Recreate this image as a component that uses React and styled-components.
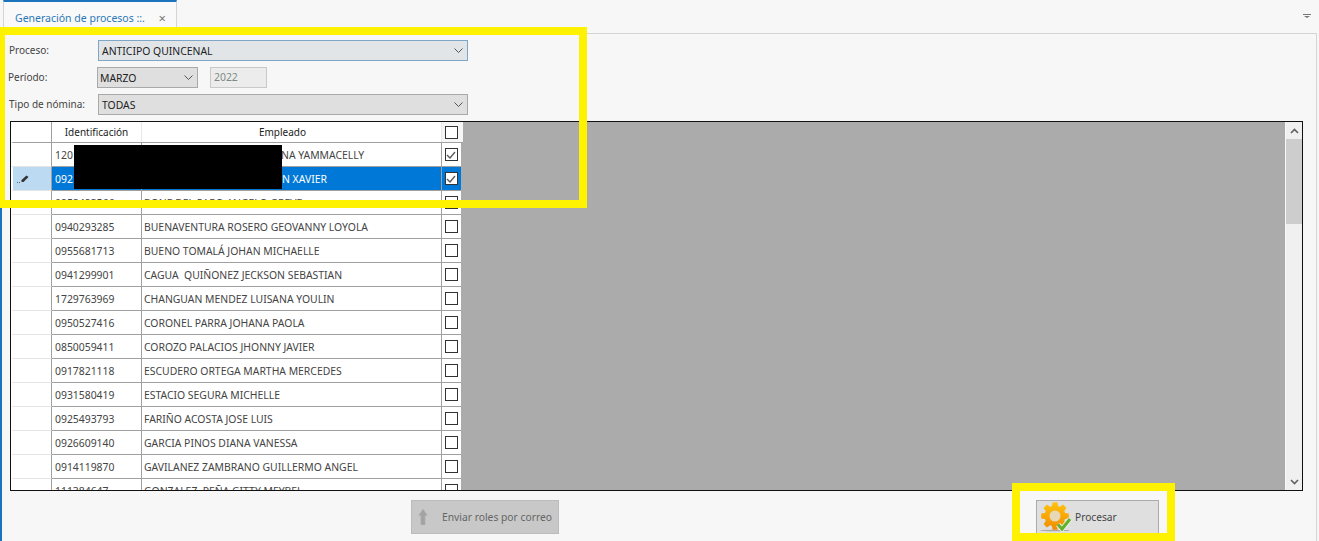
import React from "react";
import styled, { createGlobalStyle } from "styled-components";

const GlobalStyle = createGlobalStyle`
    html, body {
        margin: 0;
        padding: 0;
        background: #f7f7f7;
    }
`;

const rows = [
    { id: "120", name: "NA YAMMACELLY", indent: 139, checked: true },
    { id: "092", name: "N XAVIER", indent: 140, checked: true, selected: true },
    { id: "0958493566", name: "BONE DEL PARO ANGELO GREVE" },
    { id: "0940293285", name: "BUENAVENTURA ROSERO GEOVANNY LOYOLA" },
    { id: "0955681713", name: "BUENO TOMALÁ JOHAN MICHAELLE" },
    { id: "0941299901", name: "CAGUA  QUIÑONEZ JECKSON SEBASTIAN" },
    { id: "1729763969", name: "CHANGUAN MENDEZ LUISANA YOULIN" },
    { id: "0950527416", name: "CORONEL PARRA JOHANA PAOLA" },
    { id: "0850059411", name: "COROZO PALACIOS JHONNY JAVIER" },
    { id: "0917821118", name: "ESCUDERO ORTEGA MARTHA MERCEDES" },
    { id: "0931580419", name: "ESTACIO SEGURA MICHELLE" },
    { id: "0925493793", name: "FARIÑO ACOSTA JOSE LUIS" },
    { id: "0926609140", name: "GARCIA PINOS DIANA VANESSA" },
    { id: "0914119870", name: "GAVILANEZ ZAMBRANO GUILLERMO ANGEL" },
    { id: "111384647", name: "GONZALEZ  PEÑA GITTY MEYBEL" },
];

export default function App() {
    return (
        <>
            <GlobalStyle />
            <Screen>
                <TabStrip>
                    <Tab>
                        <TabTitle>Generación de procesos ::.</TabTitle>
                        <TabClose>×</TabClose>
                    </Tab>
                    <TabMenu>
                        <svg width="8" height="4" viewBox="0 0 8 4">
                            <path d="M0 0h8v1H0z M1 2h6L4 4z" fill="#777" />
                        </svg>
                    </TabMenu>
                </TabStrip>
                <Panel>
                    <Form>
                        <Label>Proceso:</Label>
                        <Combo $focused>
                            ANTICIPO QUINCENAL
                            <Chevron />
                        </Combo>
                        <Label $shift>Período:</Label>
                        <PeriodRow>
                            <Combo $small>
                                MARZO
                                <Chevron />
                            </Combo>
                            <YearBox>2022</YearBox>
                        </PeriodRow>
                        <Label>Tipo de nómina:</Label>
                        <Combo>
                            TODAS
                            <Chevron />
                        </Combo>
                    </Form>
                    <Grid>
                        <GridBody>
                            <HeadRow>
                                <RowHead $head />
                                <HeadCell $w={90}>Identificación</HeadCell>
                                <HeadCell $w={300} $pad={18}>Empleado</HeadCell>
                                <CheckCell $head>
                                    <CheckBox />
                                </CheckCell>
                            </HeadRow>
                            {rows.map((r) => (
                                <Row key={r.id} $selected={r.selected}>
                                    <RowHead $selected={r.selected}>
                                        {r.selected && <PencilIcon />}
                                    </RowHead>
                                    <IdCell>{r.id}</IdCell>
                                    <NameCell $indent={r.indent}>{r.name}</NameCell>
                                    <CheckCell>
                                        <CheckBox>{r.checked && <CheckMark />}</CheckBox>
                                    </CheckCell>
                                </Row>
                            ))}
                        </GridBody>
                        <ScrollBar>
                            <ScrollButton>
                                <svg width="9" height="6" viewBox="0 0 9 6">
                                    <path d="M1 5l3.5-3.5L8 5" fill="none" stroke="#606060" strokeWidth="1.6" />
                                </svg>
                            </ScrollButton>
                            <ScrollThumb />
                            <ScrollTrack />
                            <ScrollButton>
                                <svg width="9" height="6" viewBox="0 0 9 6">
                                    <path d="M1 1l3.5 3.5L8 1" fill="none" stroke="#606060" strokeWidth="1.6" />
                                </svg>
                            </ScrollButton>
                        </ScrollBar>
                    </Grid>
                    <Actions>
                        <MailButton>
                            <svg width="10" height="16" viewBox="0 0 10 16">
                                <path d="M5 0l4.500 6.500H7.200V16H2.800V6.500H0.500z" fill="#a3a3a3" stroke="#b5b5b5" strokeWidth="0.5" />
                            </svg>
                            <span>Enviar roles por correo</span>
                        </MailButton>
                        <ProcessButton>
                            <GearIcon />
                            Procesar
                        </ProcessButton>
                    </Actions>
                </Panel>
                <Redaction />
                <HighlightTop />
                <HighlightBottom />
            </Screen>
        </>
    );
}

function Chevron() {
    return (
        <ChevronWrap>
            <svg width="9" height="5" viewBox="0 0 9 5">
                <path d="M0.500 0.500l4 4 4-4" fill="none" stroke="#555" strokeWidth="1" />
            </svg>
        </ChevronWrap>
    );
}

function CheckMark() {
    return (
        <svg width="10" height="10" viewBox="0 0 10 10">
            <path d="M1 5l3 3L9 2" fill="none" stroke="#555" strokeWidth="1.300" />
        </svg>
    );
}

function PencilIcon() {
    return (
        <svg width="12" height="8" viewBox="0 0 12 8">
            <path d="M4.500 5L9.500 0.500l2 1.500L6.500 7H4.500z" fill="#333" />
            <path d="M0 7.500h1M2 7.500h1" stroke="#666" strokeWidth="1" />
        </svg>
    );
}

// builds the 8 teeth of the gear
function gearPath(cx, cy, outer, inner) {
    const pts = [];
    for (let i = 0; i < 8; i++) {
        const a = (i * Math.PI) / 4;
        [
            [-0.3, inner],
            [-0.17, outer],
            [0.17, outer],
            [0.3, inner],
        ].forEach(([d, r]) => {
            pts.push(`${(cx + r * Math.cos(a + d)).toFixed(1)} ${(cy + r * Math.sin(a + d)).toFixed(1)}`);
        });
    }
    return `M${pts.join("L")}z`;
}

function GearIcon() {
    return (
        <svg width="32" height="30" viewBox="0 0 32 30">
            <defs>
                <linearGradient id="gearFill" x1="0" y1="0" x2="0" y2="1">
                    <stop offset="0" stopColor="#ffc20e" />
                    <stop offset="1" stopColor="#f08c00" />
                </linearGradient>
            </defs>
            <ellipse cx="15" cy="28.500" rx="15" ry="0.800" fill="#a8a8a8" />
            <path d={gearPath(15, 14, 14, 10.5)} fill="url(#gearFill)" />
            <circle cx="15" cy="14" r="5.500" fill="#e8d8b8" />
            <path d="M18 22.500l4 4.500 8-10" fill="none" stroke="#eef5e4" strokeWidth="5" />
            <path d="M18 22.500l4 4.500 8-10" fill="none" stroke="#63b22f" strokeWidth="3.200" />
        </svg>
    );
}

const Screen = styled.div`
    position: relative;
    width: 1319px;
    height: 541px;
    overflow: hidden;
    background: #f7f7f7;
    font-family: "Noto Sans", sans-serif;
    font-size: 10.4px;
    color: #444;
`;

const TabStrip = styled.div`
    display: flex;
    align-items: stretch;
    height: 33px;
    padding-left: 3px;
`;

const Tab = styled.div`
    display: flex;
    align-items: center;
    justify-content: space-between;
    box-sizing: border-box;
    width: 174px;
    height: 34px;
    padding: 0 10px 0 11px;
    background: #f9f9f9;
    border-top: 2px solid #1b72bd;
    border-left: 1px solid #d4d4d4;
    border-right: 1px solid #d4d4d4;
`;

const TabTitle = styled.span`
    font-size: 10.500px;
    color: #2a78b8;
`;

const TabClose = styled.span`
    color: #777;
    font-size: 13px;
    line-height: 1;
`;

const TabMenu = styled.div`
    display: flex;
    align-items: center;
    margin-left: auto;
    padding: 0 8px 2px 0;
`;

const Panel = styled.div`
    box-sizing: border-box;
    width: 1317px;
    height: 508px;
    padding-left: 8px;
    border-top: 1px solid #d4d4d4;
    border-right: 1px solid #d4d4d4;
    border-left: 2px solid #1b72bd;
`;

const Form = styled.div`
    display: grid;
    box-sizing: border-box;
    grid-template-columns: 88px 370px;
    grid-auto-rows: 21px;
    row-gap: 6px;
    align-items: center;
    height: 81px;
    padding-top: 6px;
`;

const Label = styled.div`
    margin-left: ${(p) => (p.$shift ? "-2px" : "-1px")};
    margin-top: -1px;
    font-size: 10px;
`;

const Combo = styled.div`
    display: flex;
    align-items: center;
    justify-content: space-between;
    box-sizing: border-box;
    width: ${(p) => (p.$small ? "101px" : "370px")};
    height: 21px;
    padding-left: ${(p) => (p.$small ? "2px" : "3px")};
    margin-left: ${(p) => (p.$small ? "-1px" : "0")};
    color: #222;
    background: ${(p) => (p.$focused ? "#e1e5e8" : "#dfdfdf")};
    border: 1px solid ${(p) => (p.$focused ? "#7fa6c4" : "#a9a9a9")};
`;

const ChevronWrap = styled.span`
    display: flex;
    padding-right: 4px;
`;

const PeriodRow = styled.div`
    display: flex;
    align-items: center;
    gap: 12px;
`;

const YearBox = styled.div`
    box-sizing: border-box;
    width: 57px;
    height: 21px;
    padding-left: 3px;
    line-height: 19px;
    color: #7d8a85;
    background: #ececec;
    border: 1px solid #c9c9c9;
`;

const Grid = styled.div`
    display: flex;
    box-sizing: border-box;
    width: 1293px;
    height: 370px;
    margin-top: 6px;
    background: #ababab;
    border: 1px solid #111;
`;

const GridBody = styled.div`
    flex: 1;
    height: 368px;
    overflow: hidden;
`;

const HeadRow = styled.div`
    display: flex;
    box-sizing: border-box;
    width: 452px;
    height: 21px;
    background: #fff;
    border-bottom: 1px solid #a0a0a0;
`;

const Row = styled.div`
    display: flex;
    box-sizing: border-box;
    width: 450px;
    height: 24px;
    background: ${(p) => (p.$selected ? "#0078d7" : "#fff")};
    border-bottom: 1px solid #a0a0a0;
    color: ${(p) => (p.$selected ? "#fff" : "#444")};
`;

const RowHead = styled.div`
    display: flex;
    align-items: center;
    box-sizing: border-box;
    width: 41px;
    margin-bottom: -1px;
    padding-left: 4px;
    background: ${(p) => (p.$selected ? "#bcdaf2" : "#fff")};
    border-left: 2px solid #fff;
    border-right: 1px solid #a0a0a0;
    border-bottom: 1px solid ${(p) => (p.$head ? "#a0a0a0" : "#e4e4e4")};
`;

const HeadCell = styled.div`
    box-sizing: border-box;
    width: ${(p) => p.$w}px;
    padding-right: ${(p) => p.$pad || 0}px;
    text-align: center;
    line-height: 21px;
    font-size: 10px;
    color: #222;
    border-right: 1px solid #e8e8e8;
`;

const IdCell = styled.div`
    box-sizing: border-box;
    width: 90px;
    padding-left: 3px;
    line-height: 24px;
    border-right: 1px solid #a0a0a0;
`;

const NameCell = styled.div`
    box-sizing: border-box;
    width: 300px;
    padding-left: ${(p) => (p.$indent ? p.$indent : 2)}px;
    line-height: 24px;
    white-space: pre;
    border-right: 1px solid #a0a0a0;
`;

const CheckCell = styled.div`
    display: flex;
    align-items: center;
    justify-content: ${(p) => (p.$head ? "flex-start" : "center")};
    box-sizing: border-box;
    width: ${(p) => (p.$head ? "21px" : "19px")};
    padding: ${(p) => (p.$head ? "0 0 0 3px" : "0 1px 0 0")};
    background: ${(p) => (p.$head ? "#f6f6f6" : "transparent")};
`;

const CheckBox = styled.div`
    display: flex;
    align-items: center;
    justify-content: center;
    box-sizing: border-box;
    width: 13px;
    height: 13px;
    background: #fff;
    border: 1px solid #333;
`;

const ScrollBar = styled.div`
    display: flex;
    flex-direction: column;
    width: 16px;
    background: #f0f0f0;
    border-left: 1px solid #f7f7f7;
`;

const ScrollButton = styled.div`
    display: flex;
    align-items: center;
    justify-content: center;
    height: 17px;
`;

const ScrollThumb = styled.div`
    height: 85px;
    background: #cdcdcd;
`;

const ScrollTrack = styled.div`
    flex: 1;
`;

const Actions = styled.div`
    display: flex;
    padding-top: 9px;
`;

const MailButton = styled.div`
    display: flex;
    align-items: center;
    gap: 14px;
    box-sizing: border-box;
    width: 148px;
    height: 34px;
    margin-left: 401px;
    padding-left: 6px;
    font-size: 10.300px;
    color: #666;
    background: #c8c8c8;
    border: 1px solid #bcbcbc;
`;

const ProcessButton = styled.div`
    display: flex;
    align-items: center;
    gap: 3px;
    box-sizing: border-box;
    width: 123px;
    height: 34px;
    margin-left: 477px;
    padding-left: 3px;
    font-size: 10.200px;
    color: #444;
    background: #dfdfdf;
    border: 1px solid #ababab;
`;

const Redaction = styled.div`
    position: absolute;
    left: 74px;
    top: 145px;
    width: 208px;
    height: 44px;
    background: #000;
`;

const HighlightTop = styled.div`
    position: absolute;
    left: -3px;
    top: 27px;
    box-sizing: border-box;
    width: 590px;
    height: 181px;
    border: 8px solid #fff200;
`;

const HighlightBottom = styled.div`
    position: absolute;
    left: 1012px;
    top: 483px;
    box-sizing: border-box;
    width: 163px;
    height: 58px;
    border: 8px solid #fff200;
`;
